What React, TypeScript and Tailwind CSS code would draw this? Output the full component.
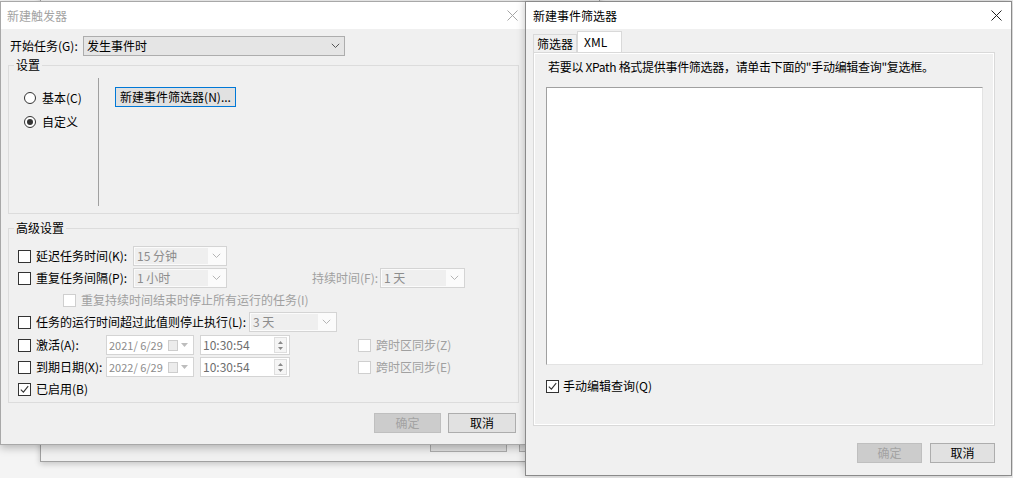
import React from "react";

const FONT = { fontFamily: '"Noto Sans CJK SC", "Noto Sans", sans-serif' };

function Check({ checked, disabled }: { checked?: boolean; disabled?: boolean }) {
  return (
    <span
      className={`inline-flex h-[13px] w-[13px] shrink-0 items-center justify-center border bg-white ${
        disabled ? "border-[#cfcfcf]" : "border-[#333333]"
      }`}
    >
      {checked && (
        <svg width="9" height="9" viewBox="0 0 9 9">
          <path d="M0.8 4.6 L3.4 7.2 L8.2 1.2" stroke="#333" strokeWidth="1.1" fill="none" />
        </svg>
      )}
    </span>
  );
}

function Radio({ checked }: { checked?: boolean }) {
  return (
    <span className="inline-flex h-[12px] w-[12px] shrink-0 items-center justify-center rounded-full border border-[#333333] bg-white">
      {checked && <span className="h-[6px] w-[6px] rounded-full bg-[#333333]" />}
    </span>
  );
}

function Chevron({ color = "#a0a0a0" }: { color?: string }) {
  return (
    <svg width="9" height="6" viewBox="0 0 9 6">
      <path d="M0.8 0.8 L4.5 4.5 L8.2 0.8" stroke={color} strokeWidth="1" fill="none" />
    </svg>
  );
}

/* disabled combo box */
function Combo({ value, w }: { value: string; w: string }) {
  return (
    <div className={`flex h-[20px] ${w} shrink-0 border border-[#d4d4d4] bg-[#fbfbfb] p-px`}>
      <div className="flex flex-1 items-center bg-[#efefef] pl-[2px] text-[#8c8c8c]">{value}</div>
      <div className="flex w-[17px] items-center justify-center">
        <Chevron color="#b5b5b5" />
      </div>
    </div>
  );
}

function DateBox({ value }: { value: string }) {
  return (
    <div className="flex h-[20px] w-[88px] shrink-0 items-center border border-[#d4d4d4] bg-white pl-[2px] text-[#8c8c8c]">
      <span className="flex-1 whitespace-pre text-[11px]">{value}</span>
      <span className="ml-[3px] mr-[3px] h-[11px] w-[10px] shrink-0 border border-[#cdcdcd] bg-[#ececec]" />
      <svg width="7" height="4" viewBox="0 0 7 4" className="mr-[5px] shrink-0">
        <path d="M0 0 L7 0 L3.5 4 Z" fill="#bdbdbd" />
      </svg>
    </div>
  );
}

function TimeBox({ value }: { value: string }) {
  return (
    <div className="flex h-[20px] w-[90px] shrink-0 items-center border border-[#d4d4d4] bg-white pl-[2px] text-[#6e6e6e]">
      <span className="flex-1">{value}</span>
      <div className="mr-[2px] flex h-[16px] w-[13px] flex-col items-center justify-center gap-[3px] border border-[#dedede] bg-[#f5f5f5]">
        <svg width="5" height="3" viewBox="0 0 5 3">
          <path d="M0 3 L5 3 L2.5 0 Z" fill="#8a8a8a" />
        </svg>
        <svg width="5" height="3" viewBox="0 0 5 3">
          <path d="M0 0 L5 0 L2.5 3 Z" fill="#8a8a8a" />
        </svg>
      </div>
    </div>
  );
}

function Btn({ label, disabled, w, focus }: { label: string; disabled?: boolean; w: string; focus?: boolean }) {
  const cls = disabled
    ? "border-[#bfbfbf] bg-[#cccccc] text-[#a3a3a3]"
    : focus
    ? "border-[#0078d7] bg-[#e1e1e1] text-black"
    : "border-[#adadad] bg-[#e1e1e1] text-black";
  return (
    <div className={`flex h-[20px] ${w} items-center justify-center border ${cls}`}>{label}</div>
  );
}

function CloseX({ color }: { color: string }) {
  return (
    <svg width="11" height="11" viewBox="0 0 11 11">
      <path d="M0.5 0.5 L10.5 10.5 M10.5 0.5 L0.5 10.5" stroke={color} strokeWidth="1" />
    </svg>
  );
}

function TriggerDialog() {
  return (
    <div className="absolute left-0 top-[1px] flex h-[444px] w-[527px] flex-col border border-[#a8a8a8] bg-[#f0f0f0] shadow-[0_3px_8px_rgba(0,0,0,0.25)]">
      {/* title */}
      <div className="flex h-[27px] shrink-0 items-center justify-between bg-white pl-[6px] pr-[8px] text-[#a3a3a3]">
        <span>新建触发器</span>
        <CloseX color="#a5a5a5" />
      </div>

      <div className="flex flex-col px-[7px]">
        {/* start task */}
        <div className="mt-[7px] flex h-[20px] items-center">
          <span className="w-[75px] pl-[2px]">开始任务(G):</span>
          <div className="flex h-[20px] w-[262px] items-center justify-between border border-[#adadad] bg-[#e5e5e5] pl-[3px] pr-[4px]">
            <span>发生事件时</span>
            <Chevron color="#555" />
          </div>
        </div>

        {/* settings group */}
        <fieldset className="mt-[1px] h-[157px] min-w-0 border border-[#dcdcdc]">
          <legend className="ml-[5px] px-[2px] leading-[16px]">设置</legend>
          <div className="mt-[5px] flex">
            <div className="flex h-[128px] w-[90px] flex-col border-r border-[#a0a0a0]">
              <div className="mt-[12px] flex items-center gap-[6px] pl-[15px]">
                <Radio />
                <span>基本(C)</span>
              </div>
              <div className="mt-[8px] flex items-center gap-[6px] pl-[15px]">
                <Radio checked />
                <span>自定义</span>
              </div>
            </div>
            <div className="ml-[16px] mt-[9px]">
              <Btn label="新建事件筛选器(N)..." w="w-[121px]" focus />
            </div>
          </div>
        </fieldset>

        {/* advanced group */}
        <fieldset className="mt-[6px] h-[183px] min-w-0 border border-[#dcdcdc]">
          <legend className="ml-[5px] px-[2px] leading-[16px]">高级设置</legend>
          <div className="flex flex-col pl-[9px]">
            <div className="mt-[10px] flex h-[20px] items-center">
              <Check />
              <span className="ml-[5px] w-[97px]">延迟任务时间(K):</span>
              <Combo value="15 分钟" w="w-[94px]" />
            </div>
            <div className="mt-[2px] flex h-[20px] items-center">
              <Check />
              <span className="ml-[5px] w-[97px]">重复任务间隔(P):</span>
              <Combo value="1 小时" w="w-[94px]" />
              <span className="ml-[85px] w-[68px] text-[#a0a0a0]">持续时间(F):</span>
              <Combo value="1 天" w="w-[85px]" />
            </div>
            <div className="mt-[2px] flex h-[20px] items-center pl-[45px]">
              <Check disabled />
              <span className="ml-[5px] text-[#a0a0a0]">重复持续时间结束时停止所有运行的任务(I)</span>
            </div>
            <div className="mt-[2px] flex h-[20px] items-center">
              <Check />
              <span className="ml-[5px] w-[213px]">任务的运行时间超过此值则停止执行(L):</span>
              <Combo value="3 天" w="w-[88px]" />
            </div>
            <div className="mt-[3px] flex h-[20px] items-center">
              <Check />
              <span className="ml-[5px] w-[70px]">激活(A):</span>
              <DateBox value="2021/ 6/29" />
              <span className="ml-[6px]" />
              <TimeBox value="10:30:54" />
              <span className="ml-[68px]" />
              <Check disabled />
              <span className="ml-[5px] text-[#a0a0a0]">跨时区同步(Z)</span>
            </div>
            <div className="mt-[2px] flex h-[20px] items-center">
              <Check />
              <span className="ml-[5px] w-[70px]">到期日期(X):</span>
              <DateBox value="2022/ 6/29" />
              <span className="ml-[6px]" />
              <TimeBox value="10:30:54" />
              <span className="ml-[68px]" />
              <Check disabled />
              <span className="ml-[5px] text-[#a0a0a0]">跨时区同步(E)</span>
            </div>
            <div className="mt-[2px] flex h-[20px] items-center">
              <Check checked />
              <span className="ml-[5px]">已启用(B)</span>
            </div>
          </div>
        </fieldset>

        {/* buttons */}
        <div className="mt-[10px] flex justify-end gap-[7px] pr-[3px]">
          <Btn label="确定" w="w-[67px]" disabled />
          <Btn label="取消" w="w-[68px]" />
        </div>
      </div>
    </div>
  );
}

function FilterDialog() {
  return (
    <div className="absolute left-[525px] top-[1px] flex h-[475px] w-[487px] flex-col border border-[#8a8a8a] bg-[#f0f0f0] shadow-[0_0_8px_rgba(0,0,0,0.25)]">
      <div className="flex h-[27px] shrink-0 items-center justify-between bg-white pl-[7px] pr-[9px] text-black">
        <span>新建事件筛选器</span>
        <CloseX color="#222" />
      </div>

      <div className="flex flex-col px-[7px]">
        {/* tabs */}
        <div className="mt-[2px] flex h-[21px] items-end">
          <div className="flex h-[18px] items-center border border-b-0 border-[#d9d9d9] bg-[#f0f0f0] px-[3px]">
            筛选器
          </div>
          <div className="flex h-[21px] w-[45px] items-center border border-b-0 border-[#d9d9d9] bg-white pl-[6px]">
            XML
          </div>
        </div>

        {/* panel */}
        <div className="flex h-[374px] w-[462px] flex-col border border-[#d9d9d9] shadow-[inset_1px_1px_0_#ffffff,inset_-1px_-1px_0_#ffffff]">
          <div className="mt-[6px] pl-[14px] tracking-[-0.3px]">
            若要以 XPath 格式提供事件筛选器，请单击下面的"手动编辑查询"复选框。
          </div>
          <div className="ml-[12px] mt-[12px] h-[278px] w-[437px] border border-[#a0a0a0] border-b-[#e3e3e3] border-r-[#e3e3e3] bg-white" />
          <div className="ml-[12px] mt-[13px] flex items-center">
            <Check checked />
            <span className="ml-[4px]">手动编辑查询(Q)</span>
          </div>
        </div>

        <div className="mt-[17px] flex justify-end gap-[8px] pr-[9px]">
          <Btn label="确定" w="w-[65px]" disabled />
          <Btn label="取消" w="w-[65px]" />
        </div>
      </div>
    </div>
  );
}

export default function App() {
  return (
    <div
      className="relative h-[478px] w-[1013px] overflow-hidden bg-[#f4f4f4] text-[12px] leading-[16px] text-black"
      style={FONT}
    >
      {/* window behind */}
      <div className="absolute left-[40px] top-[-20px] flex h-[482px] w-[560px] items-end justify-end gap-[12px] border border-[#a0a0a0] bg-[#f0f0f0] pb-[9px] pr-[3px] shadow-[0_2px_6px_rgba(0,0,0,0.2)]">
        <div className="h-[21px] w-[77px] border border-[#adadad] bg-[#e1e1e1]" />
        <div className="h-[21px] w-[77px] border border-[#adadad] bg-[#e1e1e1]" />
      </div>

      <TriggerDialog />
      <FilterDialog />
    </div>
  );
}
